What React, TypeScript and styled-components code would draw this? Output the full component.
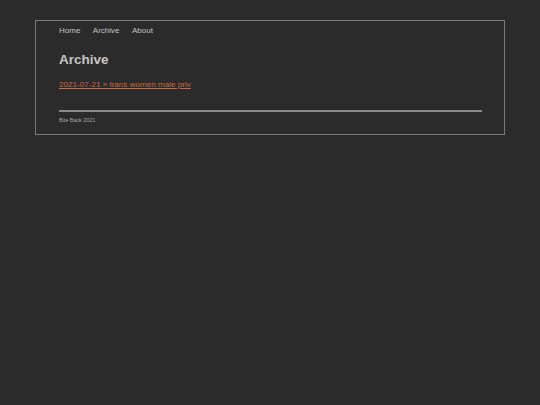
import React from "react";
import styled, { createGlobalStyle } from "styled-components";

const Global = createGlobalStyle`
  html, body {
    margin: 0;
    padding: 0;
    background: #2b2b2b;
  }
  body {
    font-family: "Liberation Sans", Arial, sans-serif;
    color: #bdbdbd;
  }
`;

const Page = styled.div`
  padding-top: 20px;
  display: flex;
  justify-content: center;
`;

const Box = styled.div`
  box-sizing: border-box;
  width: 470px;
  border: 1px solid #7a7a7a;
  padding: 0 22px 0 23px;
  display: flex;
  flex-direction: column;
`;

const Nav = styled.nav`
  display: flex;
  gap: 12.5px;
  height: 18px;
  align-items: center;
`;

const NavLink = styled.a`
  font-size: 8px;
  color: #c2c2c2;
  text-decoration: none;
`;

const Title = styled.h1`
  margin: 11px 0 0;
  font-size: 13.5px;
  line-height: 20px;
  font-weight: bold;
  color: #c6c6c6;
`;

const PostLink = styled.a`
  margin-top: 7px;
  font-size: 8.1px;
  line-height: 16px;
  color: #cc6a40;
  text-decoration: underline;
  align-self: flex-start;
`;

const Rule = styled.hr`
  margin: 17px 0 0;
  border: none;
  height: 2px;
  background: #8a8a8a;
`;

const Footer = styled.footer`
  font-size: 5.4px;
  line-height: 8px;
  margin: 4px 0 10px;
  color: #a8a8a8;
`;

export default function App() {
  return (
    <>
      <Global />
      <Page>
        <Box>
          <Nav>
            <NavLink href="#">Home</NavLink>
            <NavLink href="#">Archive</NavLink>
            <NavLink href="#">About</NavLink>
          </Nav>
          <Title>Archive</Title>
          <PostLink href="#">2021-07-21 » trans women male priv</PostLink>
          <Rule />
          <Footer>Bite Back 2021</Footer>
        </Box>
      </Page>
    </>
  );
}
